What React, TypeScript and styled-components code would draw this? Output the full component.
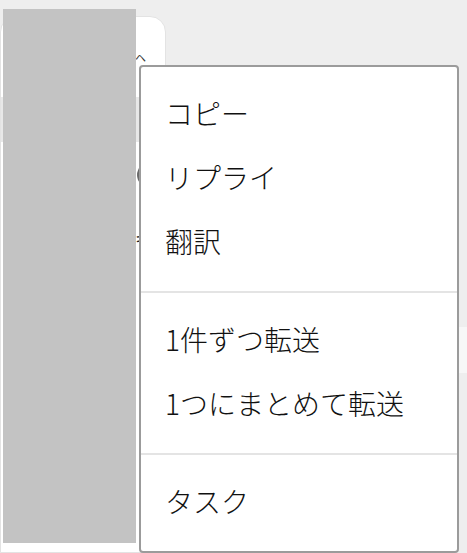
import React from "react";
import styled, { createGlobalStyle } from "styled-components";

const GlobalStyle = createGlobalStyle`
  html, body { margin: 0; padding: 0; background: #eeeeee; }
  body { font-family: "Noto Sans CJK JP", "Noto Sans", sans-serif; }
`;

const Page = styled.div`
  position: relative;
  width: 467px;
  height: 553px;
  overflow: hidden;
  background: #eeeeee;
`;

const Backdrop = styled.div`
  display: flex;
  height: 100%;
`;

const Card = styled.div`
  box-sizing: border-box;
  width: 166px;
  margin-top: 16px;
  background: #ffffff;
  border: 1px solid #e3e3e3;
  border-radius: 16px 16px 0 0;
  display: flex;
  flex-direction: column;
  align-items: flex-end;
  padding-top: 31px;
  color: #333;
`;

const Chevron = styled.div`
  width: 30px;
  height: 18px;
  font-size: 11px;
  line-height: 18px;
  text-align: left;
`;

const GreyRow = styled.div`
  align-self: stretch;
  height: 45px;
  margin-top: 31px;
  background: #e8e8e8;
`;

const Avatar = styled.div`
  width: 24px;
  height: 24px;
  border-radius: 50%;
  background: #6b6b6b;
  margin-top: 21px;
  margin-right: 4px;
`;

const Glyph = styled.div`
  width: 24px;
  font-size: 16px;
  line-height: 20px;
  margin-top: 41px;
  padding-right: 6px;
  color: #222;
`;

const RightArea = styled.div`
  flex: 1;
  padding-top: 327px;
`;

const Strip = styled.div`
  height: 46px;
  background: #f7f7f7;
`;

const Redaction = styled.div`
  position: absolute;
  left: 3px;
  top: 9px;
  width: 133px;
  height: 534px;
  background: #c3c3c3;
`;

const Menu = styled.div`
  position: absolute;
  left: 139px;
  top: 65px;
  width: 320px;
  box-sizing: border-box;
  background: #ffffff;
  border: 2px solid #9b9b9b;
  border-radius: 4px;
  display: flex;
  flex-direction: column;
`;

const Group = styled.div`
  display: flex;
  flex-direction: column;
  padding: 16px 0;
`;

const Divider = styled.div`
  height: 2px;
  background: #e4e4e4;
`;

const Item = styled.div`
  height: 64px;
  display: flex;
  align-items: center;
  padding-left: 24px;
  padding-bottom: 5px;
  box-sizing: border-box;
  font-size: 28px;
  font-weight: 300;
  color: #111111;
  white-space: nowrap;
`;

const groups = [
  ["コピー", "リプライ", "翻訳"],
  ["1件ずつ転送", "1つにまとめて転送"],
  ["タスク"],
];

export default function App() {
  return (
    <Page>
      <GlobalStyle />
      <Backdrop>
        <Card>
          <Chevron>ヘ</Chevron>
          <GreyRow />
          <Avatar />
          <Glyph>キ</Glyph>
        </Card>
        <RightArea>
          <Strip />
        </RightArea>
      </Backdrop>
      <Redaction />
      <Menu>
        {groups.map((g, i) => (
          <React.Fragment key={i}>
            {i > 0 && <Divider />}
            <Group>
              {g.map((t) => (
                <Item key={t}>{t}</Item>
              ))}
            </Group>
          </React.Fragment>
        ))}
      </Menu>
    </Page>
  );
}
